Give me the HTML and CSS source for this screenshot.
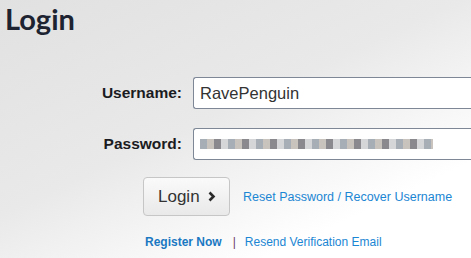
FILE: index.html
```html
<!DOCTYPE html>
<html lang="en">
<head>
    <meta charset="UTF-8">
    <meta name="viewport" content="width=device-width, initial-scale=1.0">
    <title>Login</title>
    <link rel="stylesheet" href="styles.css">
</head>
<body>
    <h1 class="title">Login</h1>
    <form class="login-form">
        <div class="row">
            <label class="label">Username:</label>
            <div class="field">RavePenguin</div>
        </div>
        <div class="row">
            <label class="label">Password:</label>
            <div class="field"><span class="masked"></span></div>
        </div>
        <div class="actions">
            <button type="button" class="btn">Login
                <svg class="chev" width="8" height="11" viewBox="0 0 8 11"><path d="M1.5 1.5 L5.5 5.5 L1.5 9.5" fill="none" stroke="#2b2b2b" stroke-width="2.6"/></svg>
            </button>
            <a href="#" class="link">Reset Password / Recover Username</a>
        </div>
        <div class="extra">
            <a href="#" class="link strong">Register Now</a>
            <span class="sep">|</span>
            <a href="#" class="link small">Resend Verification Email</a>
        </div>
    </form>
</body>
</html>
```

FILE: styles.css
```css
* {
    box-sizing: border-box;
    margin: 0;
    padding: 0;
}
html, body {
    height: 100%;
}
body {
    overflow: hidden;
    font-family: "Liberation Sans", Arial, sans-serif;
    background: linear-gradient(155deg, #e1e1e1 0%, #e9e9e9 45%, #ffffff 80%);
}
.title {
    font-family: Lato, "Liberation Sans", sans-serif;
    font-weight: 700;
    font-size: 29px;
    line-height: 30px;
    color: #1d2331;
    padding: 4px 0 0 5px;
}
.login-form {
    display: flex;
    flex-direction: column;
    margin-top: 43px;
}
.row {
    display: grid;
    grid-template-columns: 182px 1fr;
    column-gap: 11px;
    align-items: center;
    margin-bottom: 19px;
}
.label {
    text-align: right;
    font-weight: bold;
    font-size: 15.5px;
    color: #1b1b22;
}
.field {
    height: 32px;
    border: 1px solid #7d8796;
    border-right: none;
    border-radius: 3px 0 0 3px;
    background: #fff;
    font-size: 16.5px;
    color: #333;
    padding: 0 6px;
    display: flex;
    align-items: center;
}
.masked {
    display: block;
    width: 233px;
    height: 10px;
    background:
        repeating-linear-gradient(90deg, #a8aeb5 0 7px, #c9c3bd 7px 14px, #8a8a8e 14px 21px, #d4d6d8 21px 28px);
}
.actions {
    display: flex;
    align-items: center;
    padding-left: 143px;
    margin-top: -2px;
}
.btn {
    display: flex;
    align-items: center;
    width: 87px;
    height: 39px;
    border: 1px solid #c6c6c6;
    border-radius: 4px;
    background: linear-gradient(#fafafa, #e9e9e9);
    font-family: "Liberation Sans", Arial, sans-serif;
    font-size: 17px;
    color: #333;
    padding-left: 14px;
}
.chev {
    margin-left: 8px;
}
.link {
    color: #1b86d3;
    text-decoration: none;
    font-size: 12.5px;
    margin-left: 13px;
}
.extra {
    display: flex;
    align-items: center;
    padding-left: 145px;
    margin-top: 19px;
}
.extra .link {
    margin-left: 0;
    font-size: 12px;
}
.link.strong {
    font-weight: bold;
    color: #1a78c2;
}
.sep {
    color: #6b3b6f;
    font-size: 12px;
    margin: 0 9px 0 11px;
}
```
